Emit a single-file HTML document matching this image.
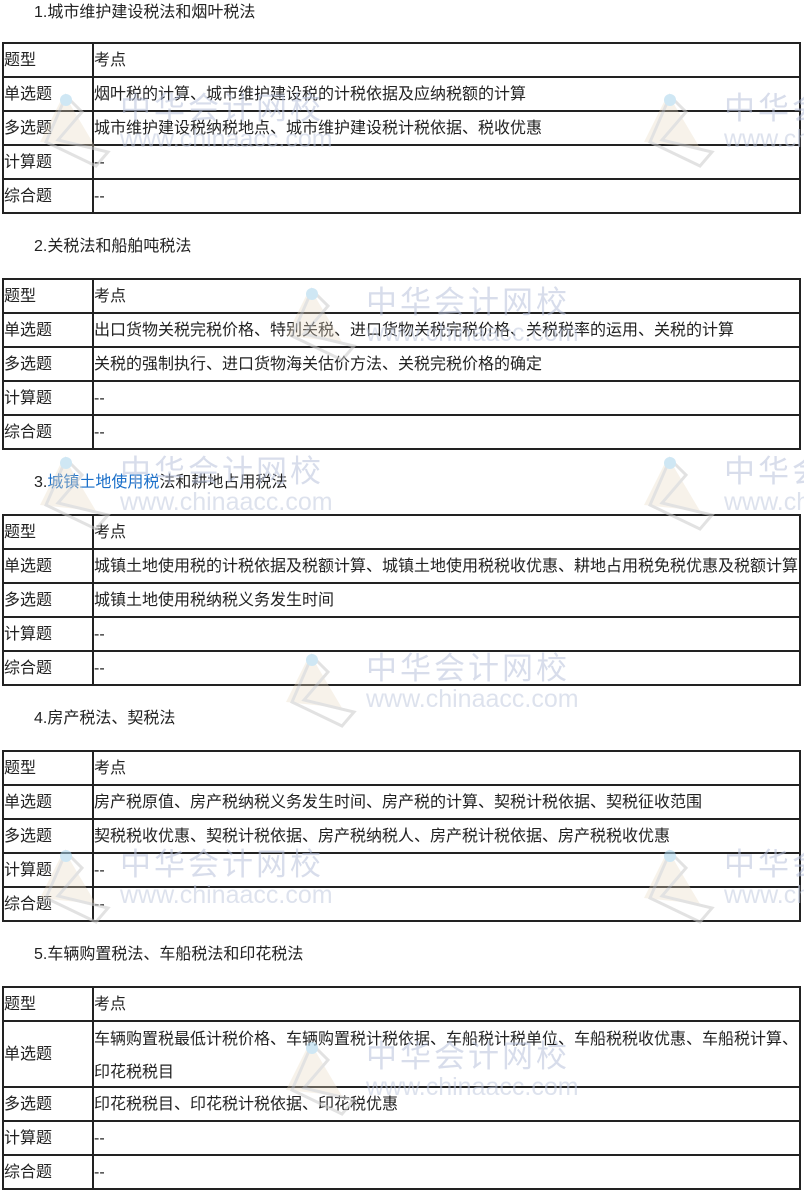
<!DOCTYPE html>
<html><head><meta charset="utf-8">
<style>
body{margin:0;width:804px;height:1192px;background:#fff;position:relative;overflow:hidden;font-family:"Liberation Sans","Noto Sans CJK SC",sans-serif;font-size:16px;color:#222;}
.h{position:absolute;left:34px;line-height:20px;}
.t{position:absolute;left:2px;width:795px;border:2px solid #222;border-bottom:none;}
.r{display:flex;border-bottom:2px solid #222;height:32px;line-height:34px;}
.r.d{height:64px;}
.c1{width:88px;flex:0 0 88px;border-right:2px solid #222;padding-left:0;white-space:nowrap;}
.d .c1{line-height:66px;}
.c2{flex:1;padding-left:0;white-space:nowrap;}
.d .c2{line-height:33px;white-space:normal;padding-top:1px;}
.wm{position:absolute;opacity:.55;pointer-events:none;}
.wm .a{position:absolute;left:84px;top:0;font-size:31px;color:#b9c3dc;letter-spacing:3px;white-space:nowrap;line-height:34px;}
.wm .b{position:absolute;left:84px;top:34px;font-size:25px;color:#c3cbe0;white-space:nowrap;line-height:26px;}
.wm svg{position:absolute;left:0;top:0;}
</style></head><body>

<div class="h" style="top:3px">1.城市维护建设税法和烟叶税法</div>
<div class="t" style="top:42px">
<div class="r"><div class="c1">题型</div><div class="c2">考点</div></div>
<div class="r"><div class="c1">单选题</div><div class="c2">烟叶税的计算、城市维护建设税的计税依据及应纳税额的计算</div></div>
<div class="r"><div class="c1">多选题</div><div class="c2">城市维护建设税纳税地点、城市维护建设税计税依据、税收优惠</div></div>
<div class="r"><div class="c1">计算题</div><div class="c2">--</div></div>
<div class="r"><div class="c1">综合题</div><div class="c2">--</div></div>
</div>

<div class="h" style="top:237px">2.关税法和船舶吨税法</div>
<div class="t" style="top:278px">
<div class="r"><div class="c1">题型</div><div class="c2">考点</div></div>
<div class="r"><div class="c1">单选题</div><div class="c2">出口货物关税完税价格、特别关税、进口货物关税完税价格、关税税率的运用、关税的计算</div></div>
<div class="r"><div class="c1">多选题</div><div class="c2">关税的强制执行、进口货物海关估价方法、关税完税价格的确定</div></div>
<div class="r"><div class="c1">计算题</div><div class="c2">--</div></div>
<div class="r"><div class="c1">综合题</div><div class="c2">--</div></div>
</div>

<div class="h" style="top:473px">3.<span style="color:#1a6fc9">城镇土地使用税</span>法和耕地占用税法</div>
<div class="t" style="top:514px">
<div class="r"><div class="c1">题型</div><div class="c2">考点</div></div>
<div class="r"><div class="c1">单选题</div><div class="c2">城镇土地使用税的计税依据及税额计算、城镇土地使用税税收优惠、耕地占用税免税优惠及税额计算</div></div>
<div class="r"><div class="c1">多选题</div><div class="c2">城镇土地使用税纳税义务发生时间</div></div>
<div class="r"><div class="c1">计算题</div><div class="c2">--</div></div>
<div class="r"><div class="c1">综合题</div><div class="c2">--</div></div>
</div>

<div class="h" style="top:709px">4.房产税法、契税法</div>
<div class="t" style="top:750px">
<div class="r"><div class="c1">题型</div><div class="c2">考点</div></div>
<div class="r"><div class="c1">单选题</div><div class="c2">房产税原值、房产税纳税义务发生时间、房产税的计算、契税计税依据、契税征收范围</div></div>
<div class="r"><div class="c1">多选题</div><div class="c2">契税税收优惠、契税计税依据、房产税纳税人、房产税计税依据、房产税税收优惠</div></div>
<div class="r"><div class="c1">计算题</div><div class="c2">--</div></div>
<div class="r"><div class="c1">综合题</div><div class="c2">--</div></div>
</div>

<div class="h" style="top:945px">5.车辆购置税法、车船税法和印花税法</div>
<div class="t" style="top:986px">
<div class="r"><div class="c1">题型</div><div class="c2">考点</div></div>
<div class="r d"><div class="c1">单选题</div><div class="c2">车辆购置税最低计税价格、车辆购置税计税依据、车船税计税单位、车船税税收优惠、车船税计算、印花税税目</div></div>
<div class="r"><div class="c1">多选题</div><div class="c2">印花税税目、印花税计税依据、印花税优惠</div></div>
<div class="r"><div class="c1">计算题</div><div class="c2">--</div></div>
<div class="r"><div class="c1">综合题</div><div class="c2">--</div></div>
</div>

<!-- watermarks -->
<div class="wm" style="left:36px;top:92px"><svg width="84" height="80"><path d="M28 2 L4 50 L60 56 Z" fill="#e8d8c0" opacity=".6"/><path d="M30 4 L46 20 L22 48 L72 60 L60 74 L10 50 Z" fill="none" stroke="#ccc" stroke-width="3"/><circle cx="30" cy="8" r="6" fill="#a8d4ec"/></svg><div class="a">中华会计网校</div><div class="b">www.chinaacc.com</div></div>
<div class="wm" style="left:640px;top:92px"><svg width="84" height="80"><path d="M28 2 L4 50 L60 56 Z" fill="#e8d8c0" opacity=".6"/><path d="M30 4 L46 20 L22 48 L72 60 L60 74 L10 50 Z" fill="none" stroke="#ccc" stroke-width="3"/><circle cx="30" cy="8" r="6" fill="#a8d4ec"/></svg><div class="a">中华会计网校</div><div class="b">www.chinaacc.com</div></div>
<div class="wm" style="left:282px;top:286px"><svg width="84" height="80"><path d="M28 2 L4 50 L60 56 Z" fill="#e8d8c0" opacity=".6"/><path d="M30 4 L46 20 L22 48 L72 60 L60 74 L10 50 Z" fill="none" stroke="#ccc" stroke-width="3"/><circle cx="30" cy="8" r="6" fill="#a8d4ec"/></svg><div class="a">中华会计网校</div><div class="b">www.chinaacc.com</div></div>
<div class="wm" style="left:36px;top:455px"><svg width="84" height="80"><path d="M28 2 L4 50 L60 56 Z" fill="#e8d8c0" opacity=".6"/><path d="M30 4 L46 20 L22 48 L72 60 L60 74 L10 50 Z" fill="none" stroke="#ccc" stroke-width="3"/><circle cx="30" cy="8" r="6" fill="#a8d4ec"/></svg><div class="a">中华会计网校</div><div class="b">www.chinaacc.com</div></div>
<div class="wm" style="left:640px;top:455px"><svg width="84" height="80"><path d="M28 2 L4 50 L60 56 Z" fill="#e8d8c0" opacity=".6"/><path d="M30 4 L46 20 L22 48 L72 60 L60 74 L10 50 Z" fill="none" stroke="#ccc" stroke-width="3"/><circle cx="30" cy="8" r="6" fill="#a8d4ec"/></svg><div class="a">中华会计网校</div><div class="b">www.chinaacc.com</div></div>
<div class="wm" style="left:282px;top:652px"><svg width="84" height="80"><path d="M28 2 L4 50 L60 56 Z" fill="#e8d8c0" opacity=".6"/><path d="M30 4 L46 20 L22 48 L72 60 L60 74 L10 50 Z" fill="none" stroke="#ccc" stroke-width="3"/><circle cx="30" cy="8" r="6" fill="#a8d4ec"/></svg><div class="a">中华会计网校</div><div class="b">www.chinaacc.com</div></div>
<div class="wm" style="left:36px;top:848px"><svg width="84" height="80"><path d="M28 2 L4 50 L60 56 Z" fill="#e8d8c0" opacity=".6"/><path d="M30 4 L46 20 L22 48 L72 60 L60 74 L10 50 Z" fill="none" stroke="#ccc" stroke-width="3"/><circle cx="30" cy="8" r="6" fill="#a8d4ec"/></svg><div class="a">中华会计网校</div><div class="b">www.chinaacc.com</div></div>
<div class="wm" style="left:640px;top:848px"><svg width="84" height="80"><path d="M28 2 L4 50 L60 56 Z" fill="#e8d8c0" opacity=".6"/><path d="M30 4 L46 20 L22 48 L72 60 L60 74 L10 50 Z" fill="none" stroke="#ccc" stroke-width="3"/><circle cx="30" cy="8" r="6" fill="#a8d4ec"/></svg><div class="a">中华会计网校</div><div class="b">www.chinaacc.com</div></div>
<div class="wm" style="left:282px;top:1040px"><svg width="84" height="80"><path d="M28 2 L4 50 L60 56 Z" fill="#e8d8c0" opacity=".6"/><path d="M30 4 L46 20 L22 48 L72 60 L60 74 L10 50 Z" fill="none" stroke="#ccc" stroke-width="3"/><circle cx="30" cy="8" r="6" fill="#a8d4ec"/></svg><div class="a">中华会计网校</div><div class="b">www.chinaacc.com</div></div>
</body></html>
